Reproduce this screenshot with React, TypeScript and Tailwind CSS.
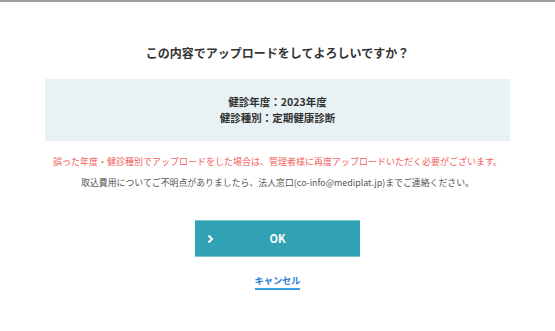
export default function App() {
  return (
    <div
      className="w-[555px] h-[331px] bg-white border-t-2 border-[#9aa0a6] flex flex-col items-center"
      style={{ fontFamily: '"Noto Sans CJK JP", "Noto Sans", sans-serif' }}
    >
      <h2 className="mt-[42px] text-[12px] leading-[18px] font-bold text-[#333333]">
        この内容でアップロードをしてよろしいですか？
      </h2>

      <div className="mt-[17px] w-[465px] h-[62px] bg-[#e8f1f4] flex flex-col items-center justify-center text-[10.5px] leading-[16px] font-bold text-[#333333]">
        <p>健診年度：2023年度</p>
        <p>健診種別：定期健康診断</p>
      </div>

      <p className="mt-[14px] text-[9px] leading-[14px] text-[#f0605c]">
        誤った年度・健診種別でアップロードをした場合は、管理者様に再度アップロードいただく必要がございます。
      </p>
      <p className="mt-[7px] text-[8.9px] leading-[14px] text-[#555555]">
        取込費用についてご不明点がありましたら、法人窓口(co-info@mediplat.jp)までご連絡ください。
      </p>

      <button className="mt-[30px] relative w-[165px] h-[37px] bg-[#31a2b3] border-y border-[#7cc4ce] flex items-center justify-center">
        <svg
          className="absolute left-[12px] top-1/2 -translate-y-1/2"
          width="7"
          height="10"
          viewBox="0 0 7 10"
        >
          <path d="M1.5 1.5 L5 5 L1.5 8.5" stroke="white" strokeWidth="2" fill="none" />
        </svg>
        <span className="text-[11px] font-bold text-white">OK</span>
      </button>

      <a className="mt-[17px] text-[9.2px] leading-[13px] font-bold text-[#2b7fd8] border-b-2 border-[#3aa0e8] pb-[1px]">
        キャンセル
      </a>
    </div>
  );
}
